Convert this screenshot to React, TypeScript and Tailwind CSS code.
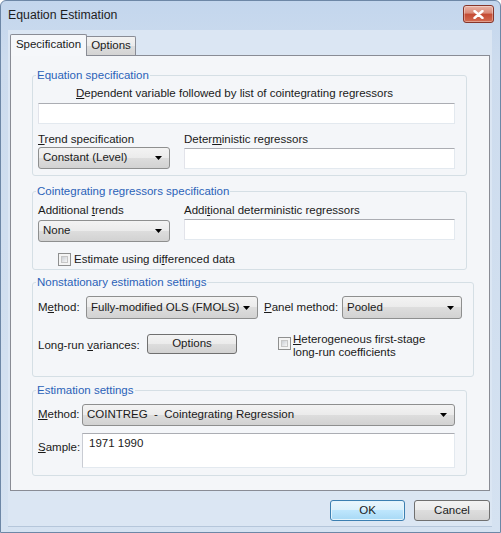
import React from "react";

// Windows 7 styled "Equation Estimation" dialog

const comboBg =
  "bg-[linear-gradient(#f3f3f3,#ebebeb_50%,#dddddd_50%,#d2d2d2)]";

function Arrow() {
  return (
    <svg width="7" height="4" viewBox="0 0 7 4" className="shrink-0">
      <path d="M0 0h7L3.5 4z" fill="#000" />
    </svg>
  );
}

function Combo({ text, className }: { text: string; className: string }) {
  return (
    <div
      className={`h-[22px] rounded-[3px] border border-[#8e8f8f] ${comboBg} flex items-center pl-[4px] pr-[7px] ${className}`}
    >
      <span className="flex-1 whitespace-pre overflow-hidden">{text}</span>
      <Arrow />
    </div>
  );
}

function Input({ className }: { className: string }) {
  return (
    <div
      className={`bg-white border border-[#e3e9ef] border-t-[#abadb3] border-l-[#e2e3ea] ${className}`}
    />
  );
}

function Check() {
  return (
    <div className="w-[13px] h-[13px] shrink-0 border border-[#8e8f8f] bg-[#f4f4f4] p-[2px]">
      <div className="w-full h-full border border-[#c6c6c6] bg-[linear-gradient(135deg,#cbcfd5,#f6f6f6)]" />
    </div>
  );
}

function Group({
  title,
  className,
  children,
}: {
  title: string;
  className: string;
  children: React.ReactNode;
}) {
  return (
    <fieldset
      className={`border border-[#d5dfe5] rounded-[3px] pl-[5px] pr-[11px] ${className}`}
    >
      <legend className="ml-[-2px] px-[1px] leading-[13px] text-[#2b62b8]">
        {title}
      </legend>
      {children}
    </fieldset>
  );
}

export default function App() {
  return (
    <div className="w-[501px] h-[533px] bg-[linear-gradient(#c3d6ed,#cddcee_60px,#d5e2f1)] border border-[#6d87a6] rounded-t-[6px] flex flex-col font-['Liberation_Sans',Arial,sans-serif] text-[11.5px] text-[#1a1a1a]">
      {/* title bar */}
      <div className="h-[29px] flex items-start pl-[7px] pr-[6px]">
        <span className="mt-[7px] text-[12.3px] leading-[15px] text-[#1e1e1e]">
          Equation Estimation
        </span>
        <div className="ml-auto mt-[4px] w-[31px] h-[18px] rounded-[3px] border border-[#86352a] bg-[linear-gradient(#eab2a5,#d98a78_45%,#c44a33_50%,#d36c52)] flex items-center justify-center shadow-[inset_0_0_0_1px_rgba(255,255,255,0.35)]">
          <svg width="11" height="9" viewBox="0 0 11 9">
            <path
              d="M1.5 1L9.5 8M9.5 1L1.5 8"
              stroke="#fff"
              strokeWidth="2.4"
              strokeLinecap="round"
            />
          </svg>
        </div>
      </div>

      {/* client */}
      <div className="flex-1 ml-[7px] mr-[8px] mb-[5px] bg-[#dbe6f3] border-b border-[#b5c6da] px-[2px] flex flex-col">
        {/* tabs */}
        <div className="h-[25px] flex items-end">
          <div className="relative z-10 mb-[-1px] h-[22px] w-[77px] border border-b-0 border-[#898c95] rounded-t-[2px] bg-[#f5f7fa] flex items-center justify-center pb-[2px]">
            Specification
          </div>
          <div className="h-[19px] w-[49px] border border-l-0 border-b-0 border-[#898c95] rounded-tr-[2px] bg-[linear-gradient(#f2f2f2,#ebebeb_50%,#dddddd_50%,#d4d4d4)] flex items-center justify-center">
            Options
          </div>
        </div>

        {/* panel */}
        <div className="h-[436px] border border-[#898c95] bg-[#f4f6f9] pl-[21px] pr-[22px] pt-[13px]">
          <Group title="Equation specification" className="pb-[6px]">
            <div className="mt-[5px] ml-[38px] leading-[13px] whitespace-nowrap">
              <span className="underline">D</span>ependent variable followed by
              list of cointegrating regressors
            </div>
            <Input className="mt-[3px] h-[21px]" />
            <div className="mt-[9px] grid grid-cols-[132px_1fr] gap-x-[14px] items-end">
              <div className="leading-[13px]">
                <span className="underline">T</span>rend specification
              </div>
              <div className="leading-[13px]">
                Deter<span className="underline">m</span>inistic regressors
              </div>
              <Combo text="Constant (Level)" className="mt-[1px]" />
              <Input className="h-[21px]" />
            </div>
          </Group>

          <Group
            title="Cointegrating regressors specification"
            className="mt-[9px] pb-[3px]"
          >
            <div className="mt-[6px] grid grid-cols-[132px_1fr] gap-x-[14px] items-start">
              <div className="leading-[13px]">
                Additional <span className="underline">t</span>rends
              </div>
              <div className="leading-[13px]">
                Addi<span className="underline">t</span>ional deterministic
                regressors
              </div>
              <Combo text="None" className="mt-[3px]" />
              <Input className="mt-[2px] h-[21px]" />
            </div>
            <div className="mt-[11px] ml-[20px] flex items-center gap-[3px] leading-[13px]">
              <Check />
              <span>
                Estimate using di<span className="underline">f</span>ferenced
                data
              </span>
            </div>
          </Group>

          <Group
            title="Nonstationary estimation settings"
            className="mt-[6px] pb-[17px] pr-[5px]"
          >
            <div className="mt-[7px] flex items-center">
              <div className="w-[48px]">
                M<span className="underline">e</span>thod:
              </div>
              <Combo text="Fully-modified OLS (FMOLS)" className="w-[172px] h-[23px]" />
              <div className="ml-[6px] w-[78px] whitespace-nowrap">
                <span className="underline">P</span>anel method:
              </div>
              <Combo text="Pooled" className="w-[120px] h-[23px]" />
            </div>
            <div className="mt-[15px] flex items-start">
              <div className="w-[109px] mt-[3px] whitespace-nowrap">
                Long-run <span className="underline">v</span>ariances:
              </div>
              <div
                className={`w-[90px] h-[20px] rounded-[3px] border border-[#707070] ${comboBg} flex items-center justify-center`}
              >
                Options
              </div>
              <div className="ml-[41px] mt-[3px]">
                <Check />
              </div>
              <div className="ml-[2px] leading-[13px] mt-[-1px]">
                <span className="underline">H</span>eterogeneous first-stage
                <br />
                long-run coefficients
              </div>
            </div>
          </Group>

          <Group title="Estimation settings" className="mt-[7px] pb-[7px]">
            <div className="mt-[7px] flex items-center">
              <div className="w-[44px]">
                <span className="underline">M</span>ethod:
              </div>
              <Combo
                text="COINTREG  -  Cointegrating Regression"
                className="flex-1"
              />
            </div>
            <div className="mt-[7px] flex items-center">
              <div className="w-[44px] mt-[-5px]">
                <span className="underline">S</span>ample:
              </div>
              <div className="flex-1 h-[35px] bg-white border border-[#e3e9ef] border-t-[#abadb3] border-l-[#c9ccd3] pl-[6px] pt-[3px] leading-[13px]">
                1971 1990
              </div>
            </div>
          </Group>
        </div>

        {/* buttons */}
        <div className="mt-[9px] flex justify-end gap-[9px]">
          <div className="w-[75px] h-[21px] rounded-[3px] border border-[#3c7fb1] bg-[linear-gradient(#eaf6fd,#d9f0fc_50%,#bee6fd_50%,#a7d9f5)] shadow-[inset_0_0_0_1px_#e4f4fc] flex items-center justify-center">
            OK
          </div>
          <div
            className={`w-[76px] h-[21px] rounded-[3px] border border-[#707070] ${comboBg} flex items-center justify-center`}
          >
            Cancel
          </div>
        </div>
      </div>
    </div>
  );
}
